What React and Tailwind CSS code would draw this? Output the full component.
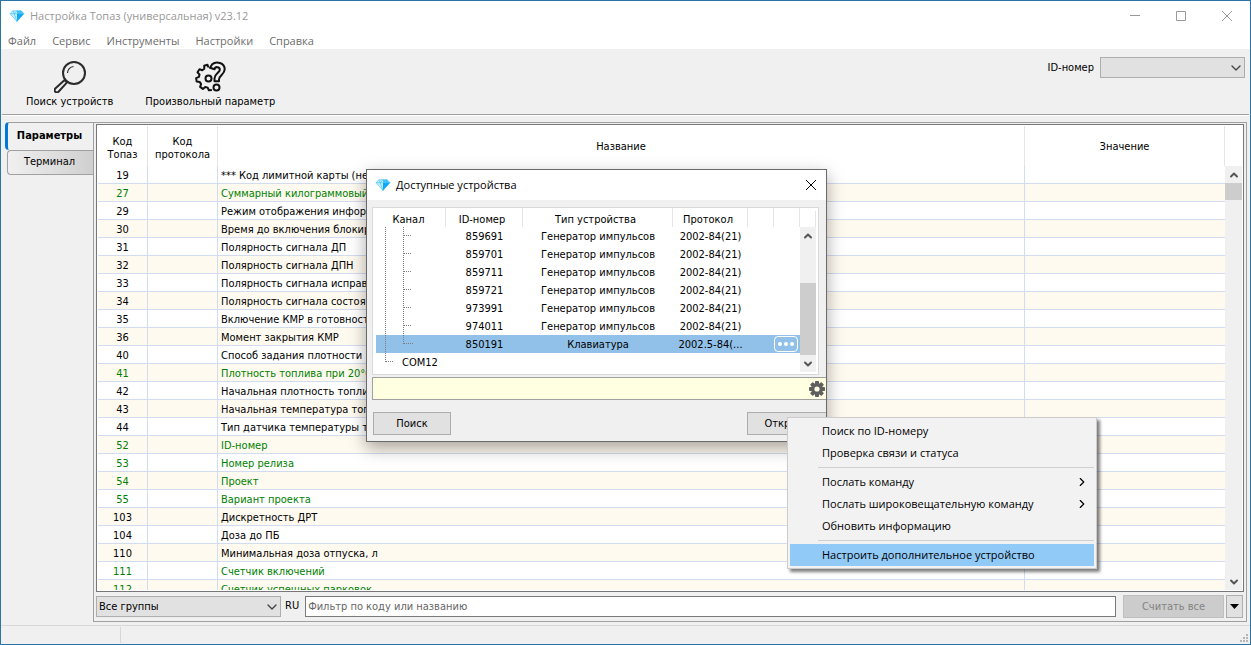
import { ChevronDown, ChevronRight, ChevronUp } from "lucide-react";

const menuItems = ["Файл", "Сервис", "Инструменты", "Настройки", "Справка"];

const params = [
  { code: "19", name: "*** Код лимитной карты (не используется)" },
  { code: "27", name: "Суммарный килограммовый счетчик", green: true },
  { code: "29", name: "Режим отображения информации" },
  { code: "30", name: "Время до включения блокировки" },
  { code: "31", name: "Полярность сигнала ДП" },
  { code: "32", name: "Полярность сигнала ДПН" },
  { code: "33", name: "Полярность сигнала исправности" },
  { code: "34", name: "Полярность сигнала состояния" },
  { code: "35", name: "Включение КМР в готовности" },
  { code: "36", name: "Момент закрытия КМР" },
  { code: "40", name: "Способ задания плотности" },
  { code: "41", name: "Плотность топлива при 20°С", green: true },
  { code: "42", name: "Начальная плотность топлива" },
  { code: "43", name: "Начальная температура топлива" },
  { code: "44", name: "Тип датчика температуры топлива" },
  { code: "52", name: "ID-номер", green: true },
  { code: "53", name: "Номер релиза", green: true },
  { code: "54", name: "Проект", green: true },
  { code: "55", name: "Вариант проекта", green: true },
  { code: "103", name: "Дискретность ДРТ" },
  { code: "104", name: "Доза до ПБ" },
  { code: "110", name: "Минимальная доза отпуска, л" },
  { code: "111", name: "Счетчик включений", green: true },
  { code: "112", name: "Счетчик успешных парковок", green: true },
];

const devices = [
  { id: "859691", type: "Генератор импульсов", protocol: "2002-84(21)" },
  { id: "859701", type: "Генератор импульсов", protocol: "2002-84(21)" },
  { id: "859711", type: "Генератор импульсов", protocol: "2002-84(21)" },
  { id: "859721", type: "Генератор импульсов", protocol: "2002-84(21)" },
  { id: "973991", type: "Генератор импульсов", protocol: "2002-84(21)" },
  { id: "974011", type: "Генератор импульсов", protocol: "2002-84(21)" },
  { id: "850191", type: "Клавиатура", protocol: "2002.5-84(...", selected: true },
];

const contextGroups = [
  [{ label: "Поиск по ID-номеру" }, { label: "Проверка связи и статуса" }],
  [
    { label: "Послать команду", sub: true },
    { label: "Послать широковещательную команду", sub: true },
    { label: "Обновить информацию" },
  ],
  [{ label: "Настроить дополнительное устройство", active: true }],
];

function Gem() {
  return (
    <svg viewBox="0 0 16 13" className="h-3 w-4 shrink-0" aria-hidden="true">
      <path d="M3.5 .8h9L15.5 4 8 12.4.5 4z" fill="#c9effd" />
      <path d="M8 4h7.5L8 12.4z" fill="#0aa5f5" />
      <path d="M8 .8h4.5L15.5 4H8z" fill="#4cc6f9" />
      <path d="M3.5.8 5 4 8 .8 11 4l1.5-3.2M.5 4h15M5 4l3 8.400L11 4M3.5.8h9L15.500 4 8 12.400.5 4z" fill="none" stroke="#2ab8f5" strokeWidth=".6" />
    </svg>
  );
}

function SearchIcon() {
  return (
    <svg viewBox="0 0 32 32" className="size-8" fill="none" stroke="#2b2b2b" aria-hidden="true">
      <circle cx="20" cy="12" r="11" strokeWidth="2" />
      <path d="M13.5 12A6.500 6.500 0 0 1 19.500 5.500" strokeWidth="1.200" />
      <path d="M11.200 18.500 1.300 27.500a2.200 2.200 0 0 0 3.200 3.200l9-9.900" strokeWidth="2" />
      <path d="m10.500 19.200 2.500 2.300" strokeWidth="1.800" />
    </svg>
  );
}

function GearQuestionIcon() {
  return (
    <svg viewBox="0 0 32 32" className="size-8" fill="none" stroke="#111" strokeWidth="2" strokeLinejoin="round" aria-hidden="true">
      <path d="M14.500 6.500 13.500 3.800l-3.300 1 .1 3-2 1.500-2.800-1-2 3 2 2.200-.5 2.400-2.900 1.200.6 3.500 3 .3 1.400 2.200-1 2.800 2.800 2 2.300-1.900 2.500.6 1.200 2.700 3-.4" />
      <circle cx="14.500" cy="17.500" r="3" />
      <path d="m16 6.800 2.200-3.500C22-.2 30.700 1.500 30.700 8.300c0 5.200-5.700 6-5.700 10.200v1.700h-4.500v-2.800c0-4.800 5.300-5.600 5.300-8.700 0-3.200-4.800-3.500-5.300-.4z" />
      <circle cx="22.500" cy="26.500" r="3" />
    </svg>
  );
}

function GearIcon() {
  return (
    <svg viewBox="0 0 16 16" className="size-4" aria-hidden="true">
      <g fill="#5f5f5f">
        <rect x="6" y="0" width="4" height="16" rx=".8" />
        <rect x="6" y="0" width="4" height="16" rx=".8" transform="rotate(45 8 8)" />
        <rect x="6" y="0" width="4" height="16" rx=".8" transform="rotate(90 8 8)" />
        <rect x="6" y="0" width="4" height="16" rx=".8" transform="rotate(135 8 8)" />
        <circle cx="8" cy="8" r="6" />
      </g>
      <circle cx="8" cy="8" r="2.600" fill="#ffffe1" />
    </svg>
  );
}

// Dotted branch lines of the device tree
function Branch({ last, root }) {
  return (
    <svg viewBox="0 0 70 18" className="h-[18px] w-[70px]" fill="none" stroke="#7d7d7d" strokeDasharray="1 1" aria-hidden="true">
      {root ? (
        <path d="M9.500 0V9M10 8.500h8" />
      ) : (
        <path d={last ? "M9.500 0V18M27.500 0V9M28 8.500h9" : "M9.500 0V18M27.500 0V18M28 8.500h8"} />
      )}
    </svg>
  );
}

function ScrollBar({ children }) {
  return (
    <div className="flex flex-1 flex-col bg-[#f0f0f0] text-[#555]">
      <button aria-label="Вверх" className="flex h-[17px] items-center justify-center">
        <ChevronUp size={12} strokeWidth={4} />
      </button>
      <div className="flex flex-1 flex-col">{children}</div>
      <button aria-label="Вниз" className="flex h-[17px] items-center justify-center">
        <ChevronDown size={12} strokeWidth={4} />
      </button>
    </div>
  );
}

function TitleBar() {
  return (
    <header className="bg-white font-['Open_Sans',sans-serif]">
      <div className="flex h-[30px] items-center justify-between pl-2">
        <div className="flex items-center gap-[5px] text-[#999]">
          <Gem />
          <h1>Настройка Топаз (универсальная) v23.12</h1>
        </div>
        <div className="flex h-full text-[#999]">
          <button aria-label="Свернуть" className="flex w-[46px] items-center justify-center">
            <svg viewBox="0 0 10 10" className="size-[10px]" stroke="currentColor"><path d="M0 4.500h10" /></svg>
          </button>
          <button aria-label="Развернуть" className="flex w-[46px] items-center justify-center">
            <svg viewBox="0 0 10 10" className="size-[10px]" fill="none" stroke="currentColor"><path d="M.5.5h9v9h-9z" /></svg>
          </button>
          <button aria-label="Закрыть" className="flex w-[46px] items-center justify-center">
            <svg viewBox="0 0 10 10" className="size-[10px]" stroke="currentColor"><path d="m0 0 10 10M10 0 0 10" /></svg>
          </button>
        </div>
      </div>
      <nav className="flex h-[18px] items-center gap-4 pt-[2px] pl-[7px] text-[#6d6d6d]">
        {menuItems.map((item) => (
          <button key={item}>{item}</button>
        ))}
      </nav>
    </header>
  );
}

function Toolbar() {
  return (
    <div className="mx-px flex h-[66px] items-start justify-between border-b border-[#a0a0a0] pr-1 pl-6 shadow-[0_1px_0_#fff]">
      <div className="flex gap-8 pt-3">
        <button className="flex flex-col items-center">
          <SearchIcon />
          <span className="pt-px leading-4">Поиск устройств</span>
        </button>
        <button className="flex flex-col items-center">
          <GearQuestionIcon />
          <span className="pt-px leading-4">Произвольный параметр</span>
        </button>
      </div>
      <div className="flex items-center gap-[6px] pt-2">
        <label htmlFor="device-id" className="pt-px">ID-номер</label>
        <div className="relative">
          <select id="device-id" className="h-[21px] w-[145px] appearance-none border border-[#adadad] bg-[#e1e1e1]" />
          <ChevronDown size={16} strokeWidth={2} className="pointer-events-none absolute top-[3px] right-px text-[#444]" />
        </div>
      </div>
    </div>
  );
}

function ParamTable() {
  return (
    <div className="flex min-h-0 flex-1 overflow-hidden border border-[#777] bg-white p-px pt-0">
      <div className="min-w-0 flex-1 overflow-hidden pt-px">
        <table className="w-full table-fixed border-separate border-spacing-0">
          <colgroup>
            <col className="w-[50px]" />
            <col className="w-[70px]" />
            <col />
            <col className="w-[200px]" />
          </colgroup>
          <thead>
            <tr className="h-10">
              <th className="border-r border-[#e5e5e5] pt-[3px] font-normal leading-[13px]">Код Топаз</th>
              <th className="border-r border-[#e5e5e5] pt-[3px] font-normal leading-[13px]">Код протокола</th>
              <th className="border-r border-[#e5e5e5] pt-[3px] font-normal">Название</th>
              <th className="border-r border-[#e5e5e5] pt-[3px] font-normal">Значение</th>
            </tr>
          </thead>
          <tbody>
            {params.map((p) => (
              <tr key={p.code} className={`h-[18px] even:bg-[#fffaf0] ${p.green ? "text-[#008000]" : ""}`}>
                <td className="border-r border-b border-[#d3dcee] p-0 pt-[2px] text-center leading-[15px]">{p.code}</td>
                <td className="border-r border-b border-[#d3dcee] p-0" />
                <td className="truncate border-r border-b border-[#d3dcee] p-0 pt-[2px] pl-[3px] leading-[15px]">{p.name}</td>
                <td className="border-b border-[#d3dcee] p-0" />
              </tr>
            ))}
          </tbody>
        </table>
      </div>
      <div className="flex w-[17px] flex-col pt-[41px]">
        <ScrollBar>
          <div className="h-[17px] bg-[#cdcdcd]" />
        </ScrollBar>
      </div>
    </div>
  );
}

function FilterBar() {
  return (
    <div className="flex items-center pt-[3px] pr-px pb-[3px]">
      <div className="relative">
        <select aria-label="Группа" className="h-[21px] w-[185px] appearance-none border border-[#adadad] bg-[#e1e1e1] pt-px pl-[2px]">
          <option>Все группы</option>
        </select>
        <ChevronDown size={16} strokeWidth={2} className="pointer-events-none absolute top-[3px] right-px text-[#444]" />
      </div>
      <label htmlFor="filter" className="pr-[6px] pl-1">RU</label>
      <input
        id="filter"
        type="text"
        placeholder="Фильтр по коду или названию"
        className="h-[21px] min-w-0 flex-1 border border-[#7a7a7a] bg-white px-[2px] placeholder:text-[#666]"
      />
      <button disabled className="ml-[7px] h-[23px] w-[101px] border border-[#bfbfbf] bg-[#ccc] pt-px text-[#838383]">
        Считать все
      </button>
      <button aria-label="Ещё" className="ml-[2px] flex h-[23px] w-[17px] items-center justify-center border border-[#adadad] bg-[#e1e1e1]">
        <svg viewBox="0 0 9 5" className="h-[5px] w-[9px] shrink-0"><path d="M0 0h9L4.500 5z" /></svg>
      </button>
    </div>
  );
}

function DeviceDialog() {
  return (
    <section role="dialog" aria-label="Доступные устройства" className="absolute top-[168px] left-[365px] w-[461px] overflow-hidden border border-[#6a6a6a] bg-[#f0f0f0] shadow-[0_6px_16px_rgba(0,0,0,0.35)]">
      <div className="flex h-[30px] items-center justify-between bg-white pr-[10px] pl-2 font-['Open_Sans',sans-serif]">
        <div className="flex items-center gap-[5px]">
          <Gem />
          <h2>Доступные устройства</h2>
        </div>
        <button aria-label="Закрыть">
          <svg viewBox="0 0 10 10" className="size-[10px]" stroke="#000"><path d="m0 0 10 10M10 0 0 10" /></svg>
        </button>
      </div>

      <div className="pt-[7px] pl-[5px]">
        <div className="mr-[7px] flex h-[168px] border border-[#d9d9d9] bg-white pr-[2px] pl-[3px]">
          <div className="flex-1">
            <table className="w-full table-fixed border-separate border-spacing-0">
              <colgroup>
                <col className="w-[70px]" />
                <col className="w-[77px]" />
                <col className="w-[150px]" />
                <col className="w-[75px]" />
                <col className="w-[26px]" />
                <col />
              </colgroup>
              <thead>
                <tr className="h-[19px]">
                  {["Канал", "ID-номер", "Тип устройства", "Протокол", "", ""].map((title, i) => (
                    <th key={i} className="border-r border-[#e5e5e5] p-0 pt-[5px] pr-1 font-normal leading-[14px]">{title}</th>
                  ))}
                </tr>
              </thead>
              <tbody>
                {devices.map((d) => (
                  <tr key={d.id} className={`h-[18px] ${d.selected ? "bg-[#91c1e9]" : ""}`}>
                    <td className="p-0"><Branch last={d.selected} /></td>
                    <td className="p-0 pt-[2px] text-center leading-4">{d.id}</td>
                    <td className="p-0 pt-[2px] text-center leading-4">{d.type}</td>
                    <td className="p-0 pt-[2px] text-center leading-4">{d.protocol}</td>
                    <td colSpan={2} className="p-0">
                      {d.selected && (
                        <button aria-label="Подробнее" className="ml-auto mr-[2px] flex h-4 w-6 items-center justify-center gap-[2px] rounded-sm border border-white">
                          <span className="size-1 rounded-full bg-white" />
                          <span className="size-1 rounded-full bg-white" />
                          <span className="size-1 rounded-full bg-white" />
                        </button>
                      )}
                    </td>
                  </tr>
                ))}
                <tr className="h-[18px]">
                  <td colSpan={6} className="p-0">
                    <div className="flex items-center">
                      <div className="w-[26px] overflow-hidden"><Branch root /></div>
                      <span className="pt-[2px] leading-4">COM12</span>
                    </div>
                  </td>
                </tr>
              </tbody>
            </table>
          </div>
          <div className="flex w-4 flex-col pb-[2px]">
            <div className="mt-[3px] h-4 border-r border-[#e5e5e5]" />
            <ScrollBar>
              <div className="flex-1" />
              <div className="h-[72px] bg-[#cdcdcd]" />
            </ScrollBar>
          </div>
        </div>

        <div className="mt-[2px] flex h-[23px] items-center border border-r-0 border-[#a0a0a0] bg-[#ffffe1]">
          <input aria-label="Сообщение" readOnly className="h-full min-w-0 flex-1" />
          <button aria-label="Параметры поиска" className="mr-px"><GearIcon /></button>
        </div>

        <div className="mt-3 mb-[6px] flex justify-between pl-px">
          <button className="h-[23px] w-[78px] border border-[#adadad] bg-[#e1e1e1] pt-px">Поиск</button>
          <button className="h-[23px] w-[79px] border border-r-0 border-[#adadad] bg-[#e1e1e1] pt-px">Открыть</button>
        </div>
      </div>
    </section>
  );
}

function ContextMenu() {
  return (
    <div role="menu" className="absolute top-[416px] left-[786px] w-[310px] border border-[#ccc] bg-[#f2f2f2] p-[2px] font-['Open_Sans',sans-serif] shadow-[3px_3px_3px_rgba(0,0,0,0.5)]">
      {contextGroups.map((group, i) => (
        <div key={i} className={i > 0 ? "relative mt-[7px] before:absolute before:-top-1 before:right-0 before:left-7 before:border-t before:border-[#d0d0d0]" : ""}>
          {group.map((item) => (
            <button
              key={item.label}
              role="menuitem"
              className={`flex h-[22px] w-full items-center justify-between pr-[5px] pl-8 text-left ${item.active ? "bg-[#91c9f7]" : ""}`}
            >
              {item.label}
              {item.sub && <ChevronRight size={14} strokeWidth={2} />}
            </button>
          ))}
        </div>
      ))}
    </div>
  );
}

export default function App() {
  return (
    <div className="relative flex h-screen flex-col overflow-hidden border border-[#2a75a5] bg-[#f0f0f0] font-['DejaVu_Sans_Condensed','DejaVu_Sans',sans-serif] text-[11px] text-black">
      <TitleBar />
      <Toolbar />

      <main className="flex min-h-0 flex-1 pt-[7px] pr-[3px] pl-1">
        <div role="tablist" className="flex w-[88px] flex-col">
          <button role="tab" aria-selected="true" className="h-7 rounded-l-sm border-t border-l-[3px] border-t-[#a0a0a0] border-l-[#0078d7] pr-[2px] font-bold">
            Параметры
          </button>
          <button role="tab" aria-selected="false" className="ml-[2px] h-[25px] rounded-l-sm border border-r-0 border-[#a0a0a0] bg-linear-to-r from-[#f0f0f0] to-[#cfcfcf] pr-[2px]">
            Терминал
          </button>
          <div className="flex-1" />
        </div>
        <div className="flex min-w-0 flex-1 flex-col border border-[#a0a0a0] px-[2px] pt-px">
          <ParamTable />
          <FilterBar />
        </div>
      </main>

      <footer className="mt-[3px] flex h-[19px] border-t border-[#d7d7d7]">
        <div className="my-px w-[120px] border-r border-[#d7d7d7]" />
        <svg viewBox="0 0 8 8" className="mt-auto mr-[2px] mb-[2px] ml-auto size-2" fill="#b5b5b5" aria-hidden="true">
          <path d="M6 0h2v2H6zM6 3h2v2H6zM6 6h2v2H6zM3 3h2v2H3zM3 6h2v2H3zM0 6h2v2H0z" />
        </svg>
      </footer>

      <DeviceDialog />
      <ContextMenu />
    </div>
  );
}
